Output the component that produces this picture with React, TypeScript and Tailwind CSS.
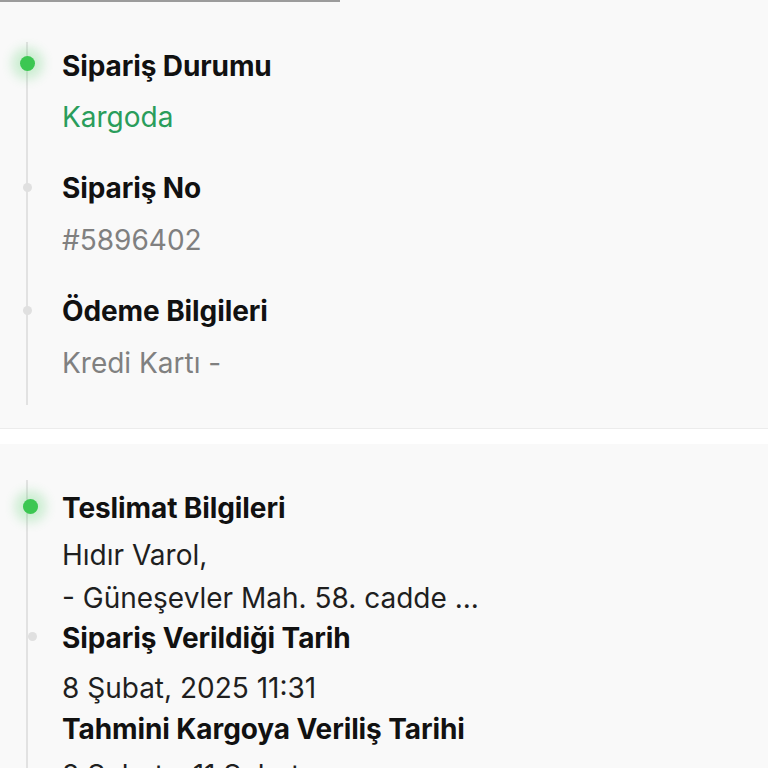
import React from 'react';

const font = { fontFamily: 'Inter, "Noto Sans", sans-serif' };

// büyük yeşil nokta (aktif adım)
function ActiveDot({ className }: { className: string }) {
    return (
        <span
            className={`absolute h-[15px] w-[15px] rounded-full bg-[#3cc752] shadow-[0_0_11px_8px_rgba(60,199,82,0.24)] ${className}`}
        />
    );
}

// küçük gri nokta
function StepDot({ className }: { className: string }) {
    return <span className={`absolute h-[9px] w-[9px] rounded-full bg-[#e0e0e0] ${className}`} />;
}

const title = 'text-[28px] font-bold leading-[30px] text-[#111111] tracking-[-0.1px]';
const value = 'text-[28px] leading-[30px]';

export default function App() {
    return (
        <div className="min-h-[768px] w-[768px] overflow-hidden bg-white" style={font}>
            {/* Sipariş özeti */}
            <section className="relative h-[429px] border-b border-[#ececec] bg-[#f9f9f9] pt-[42px]">
                <div className="absolute left-0 top-0 h-[2px] w-[340px] bg-[#9c9c9c]" />
                <div className="relative ml-[26px] h-[363px] border-l-2 border-[#e2e2e2] pl-[34px]">
                    <ActiveDot className="left-[-8.5px] top-[13.5px]" />
                    <StepDot className="left-[-5.5px] top-[141px]" />
                    <StepDot className="left-[-5.5px] top-[264px]" />

                    <div className="pt-[9px]">
                        <p className={title}>Sipariş Durumu</p>
                        <p className={`mt-[21px] ${value} text-[#2a9d5b]`}>Kargoda</p>
                    </div>
                    <div className="mt-[41px]">
                        <p className={title}>Sipariş No</p>
                        <p className={`mt-[22px] ${value} text-[#808080]`}>#5896402</p>
                    </div>
                    <div className="mt-[41px]">
                        <p className={title}>Ödeme Bilgileri</p>
                        <p className={`mt-[22px] ${value} text-[#808080]`}>Kredi Kartı -</p>
                    </div>
                </div>
            </section>

            {/* Teslimat */}
            <section className="mt-[15px] h-[340px] bg-[#f9f9f9] pt-[36px]">
                <div className="relative ml-[26px] h-[400px] border-l-2 border-[#e2e2e2] pl-[34px]">
                    <ActiveDot className="left-[-5.5px] top-[18.5px]" />
                    <StepDot className="left-[0px] top-[152px]" />

                    <div className="pt-[13px]">
                        <p className={title}>Teslimat Bilgileri</p>
                        <p className={`mt-[17px] ${value} text-[#1f1f1f]`}>Hıdır Varol,</p>
                        <p className={`mt-[13px] ${value} text-[#1f1f1f]`}>- Güneşevler Mah. 58. cadde ...</p>
                    </div>
                    <div className="mt-[10px]">
                        <p className={title}>Sipariş Verildiği Tarih</p>
                        <p className={`mt-[20px] ${value} text-[#1f1f1f]`}>8 Şubat, 2025 11:31</p>
                    </div>
                    <div className="mt-[11px]">
                        <p className={title}>Tahmini Kargoya Veriliş Tarihi</p>
                        <p className={`mt-[16px] ${value} text-[#1f1f1f]`}>8 Şubat - 11 Şubat</p>
                    </div>
                </div>
            </section>
        </div>
    );
}
